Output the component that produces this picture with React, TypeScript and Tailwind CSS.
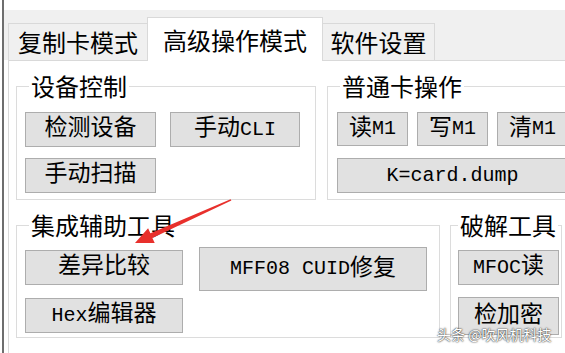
import type { ReactNode } from 'react';

const btnBase =
  "flex items-center justify-center bg-[#e1e1e1] border border-[#adadad] text-black text-[23px] leading-none font-['Liberation_Mono','Noto_Sans_CJK_SC',monospace] whitespace-nowrap shrink-0";

const Btn = ({ children, className }: { children: ReactNode; className: string }) => (
  <div className={`${btnBase} ${className}`}>{children}</div>
);

const Latin = ({ children }: { children: ReactNode }) => (
  <span className="text-[20px]">{children}</span>
);

const Group = ({
  title,
  className,
  legendClass,
  children
}: {
  title: string;
  className: string;
  legendClass: string;
  children: ReactNode;
}) => (
  <fieldset className={`min-w-0 shrink-0 border border-[#dcdcdc] ${className}`}>
    <legend
      className={`whitespace-nowrap text-[24px] leading-[26px] text-black font-['Noto_Sans_CJK_SC',sans-serif] ${legendClass}`}
    >
      {title}
    </legend>
    {children}
  </fieldset>
);

const RedArrow = () => (
  <svg className="pointer-events-none absolute left-0 top-0" width="565" height="353" aria-hidden>
    <polygon
      points="135,243 154.7,242.9 152.4,237.9 231.4,200.6 230.6,199.2 150.4,233.3 148.1,228.3"
      fill="#e8302c"
    />
  </svg>
);

export default function App() {
  return (
    <div className="relative flex h-[353px] w-[565px] overflow-hidden bg-white">
      <div className="w-[2px] shrink-0 bg-white" />
      <div className="w-[2px] shrink-0 bg-[#6e6e6e]" />

      <div className="flex min-w-0 flex-1 flex-col">
        <div className="h-[10px] bg-white" />

        {/* tab strip */}
        <div className="relative z-10 flex h-[50px] items-end bg-[#f0f0f0] pl-[4px] font-['Noto_Sans_CJK_SC',sans-serif] text-[24px] leading-none text-black">
          <div className="flex h-[37px] w-[140px] items-center justify-center border border-b-0 border-[#d9d9d9] bg-[#f0f0f0]">
            复制卡模式
          </div>
          <div className="-mb-px -ml-px flex h-[44px] w-[176px] items-center justify-center border border-b-0 border-[#d9d9d9] bg-white">
            高级操作模式
          </div>
          <div className="-ml-px flex h-[37px] w-[113px] items-center justify-center border border-b-0 border-[#d9d9d9] bg-[#f0f0f0]">
            软件设置
          </div>
        </div>

        {/* tab page */}
        <div className="ml-[4px] flex flex-1 flex-col border-l border-t border-[#d9d9d9] bg-white pl-[7px] pt-[12px]">
          <div className="flex gap-[11px]">
            <Group title="设备控制" className="h-[127px] w-[300px] px-[8px]" legendClass="ml-[4px] px-[2px]">
              <div className="flex flex-col gap-[11px] pt-[13px]">
                <div className="flex gap-[14px]">
                  <Btn className="h-[35px] w-[131px]">检测设备</Btn>
                  <Btn className="h-[35px] w-[130px]">
                    手动<Latin>CLI</Latin>
                  </Btn>
                </div>
                <Btn className="h-[35px] w-[131px]">手动扫描</Btn>
              </div>
            </Group>

            <Group title="普通卡操作" className="h-[127px] w-[260px] px-[9px]" legendClass="ml-[3px] px-[2px]">
              <div className="flex flex-col gap-[12px] pt-[13px]">
                <div className="flex gap-[9px]">
                  <Btn className="h-[34px] w-[71px]">
                    读<Latin>M1</Latin>
                  </Btn>
                  <Btn className="h-[34px] w-[71px]">
                    写<Latin>M1</Latin>
                  </Btn>
                  <Btn className="h-[34px] w-[71px]">
                    清<Latin>M1</Latin>
                  </Btn>
                </div>
                <Btn className="h-[35px] w-[231px]">
                  <Latin>K=card.dump</Latin>
                </Btn>
              </div>
            </Group>
          </div>

          <div className="mt-[12px] flex gap-[10px]">
            <Group title="集成辅助工具" className="h-[126px] w-[424px] px-[8px]" legendClass="ml-[4px] px-[2px]">
              <div className="flex items-start gap-[16px] pt-[9px]">
                <div className="flex flex-col gap-[13px] pt-[3px]">
                  <Btn className="h-[35px] w-[158px]">差异比较</Btn>
                  <Btn className="h-[35px] w-[158px]">
                    <Latin>Hex</Latin>编辑器
                  </Btn>
                </div>
                <Btn className="h-[44px] w-[228px]">
                  <Latin>MFF08 CUID</Latin>修复
                </Btn>
              </div>
            </Group>

            <Group title="破解工具" className="h-[126px] w-[112px] px-[7px]" legendClass="ml-0 px-[2px]">
              <div className="flex flex-col gap-[12px] pt-[12px]">
                <Btn className="h-[35px] w-[101px]">
                  <Latin>MFOC</Latin>读
                </Btn>
                <Btn className="h-[38px] w-[101px]">检加密</Btn>
              </div>
            </Group>
          </div>
        </div>
      </div>

      <RedArrow />

      <div className="absolute left-[437px] top-[327px] whitespace-nowrap font-['Noto_Sans_CJK_SC',sans-serif] text-[14px] leading-none text-white [text-shadow:0_0_2px_#333,0_0_1px_#333]">
        头条 @吹风机科技
      </div>
    </div>
  );
}
